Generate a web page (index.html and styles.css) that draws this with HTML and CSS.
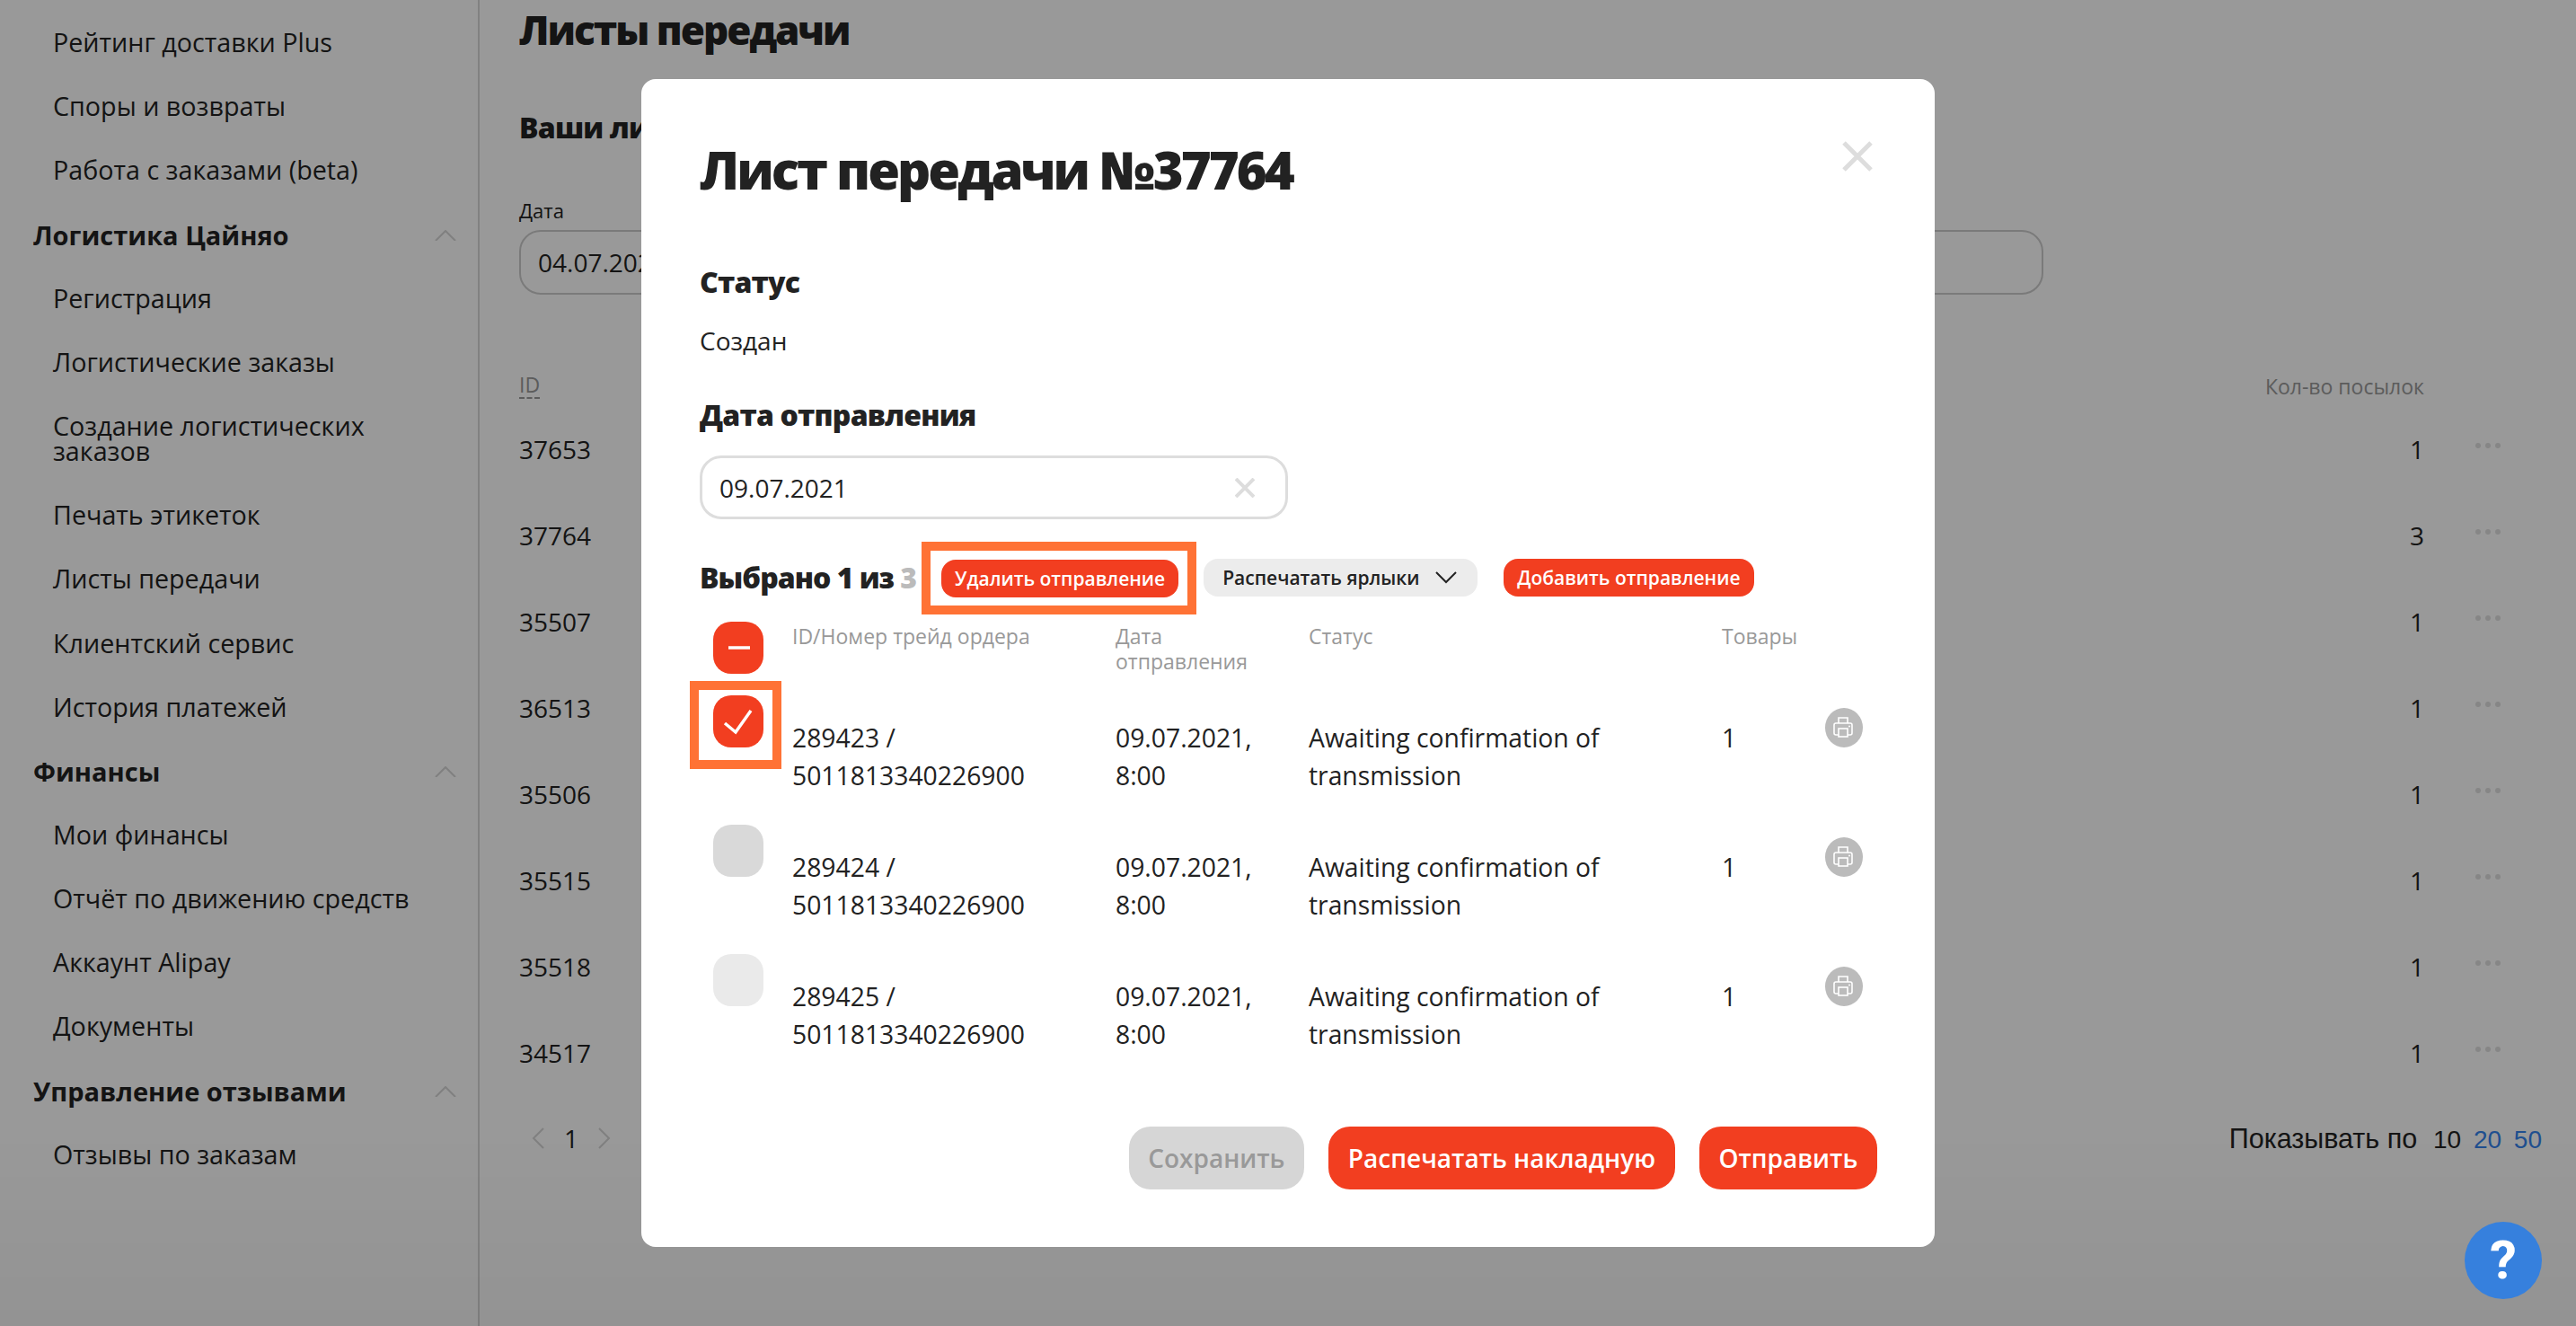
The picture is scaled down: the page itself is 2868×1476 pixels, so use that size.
FILE: index.html
```html
<!DOCTYPE html>
<html lang="ru">
<head>
    <meta charset="UTF-8">
    <title>Листы передачи</title>
    <link rel="stylesheet" href="styles.css">
</head>
<body>
    <div class="page">
        <nav class="sidebar">
            <a class="side-item">Рейтинг доставки Plus</a>
            <a class="side-item">Споры и возвраты</a>
            <a class="side-item">Работа с заказами (beta)</a>
            <div class="side-head">Логистика Цайняо <svg class="side-arrow" viewBox="0 0 24 12"><path d="M1 12 12 1l11 11"/></svg></div>
            <a class="side-item">Регистрация</a>
            <a class="side-item">Логистические заказы</a>
            <a class="side-item">Создание логистических заказов</a>
            <a class="side-item">Печать этикеток</a>
            <a class="side-item">Листы передачи</a>
            <a class="side-item">Клиентский сервис</a>
            <a class="side-item">История платежей</a>
            <div class="side-head">Финансы <svg class="side-arrow" viewBox="0 0 24 12"><path d="M1 12 12 1l11 11"/></svg></div>
            <a class="side-item">Мои финансы</a>
            <a class="side-item">Отчёт по движению средств</a>
            <a class="side-item">Аккаунт Alipay</a>
            <a class="side-item">Документы</a>
            <div class="side-head">Управление отзывами <svg class="side-arrow" viewBox="0 0 24 12"><path d="M1 12 12 1l11 11"/></svg></div>
            <a class="side-item">Отзывы по заказам</a>
        </nav>

        <main class="content">
            <h1 class="page-title">Листы передачи</h1>
            <h2 class="page-sub">Ваши листы передачи</h2>
            <div class="filter-label">Дата</div>
            <div class="filter-input">04.07.2021</div>

            <div class="list-head">
                <span class="list-id">ID</span>
                <span class="list-count">Кол-во посылок</span>
            </div>
            <div class="list-row"><span>37653</span><span class="list-num">1</span><span class="dots"><i></i><i></i><i></i></span></div>
            <div class="list-row"><span>37764</span><span class="list-num">3</span><span class="dots"><i></i><i></i><i></i></span></div>
            <div class="list-row"><span>35507</span><span class="list-num">1</span><span class="dots"><i></i><i></i><i></i></span></div>
            <div class="list-row"><span>36513</span><span class="list-num">1</span><span class="dots"><i></i><i></i><i></i></span></div>
            <div class="list-row"><span>35506</span><span class="list-num">1</span><span class="dots"><i></i><i></i><i></i></span></div>
            <div class="list-row"><span>35515</span><span class="list-num">1</span><span class="dots"><i></i><i></i><i></i></span></div>
            <div class="list-row"><span>35518</span><span class="list-num">1</span><span class="dots"><i></i><i></i><i></i></span></div>
            <div class="list-row"><span>34517</span><span class="list-num">1</span><span class="dots"><i></i><i></i><i></i></span></div>

            <div class="list-foot">
                <div class="pager">
                    <svg class="pager-arrow" viewBox="0 0 14 24"><path d="M13 1 2 12l11 11"/></svg>
                    <span>1</span>
                    <svg class="pager-arrow" viewBox="0 0 14 24"><path d="M1 1l11 11L1 23"/></svg>
                </div>
                <div class="per-page"><span class="per-label">Показывать по</span> <b>10</b> <a>20</a> <a>50</a></div>
            </div>
        </main>
    </div>

    <div class="overlay">
        <div class="modal">
            <svg class="modal-close" viewBox="0 0 34 34"><path d="M2 2l30 30M32 2 2 32"/></svg>
            <h1 class="modal-title">Лист передачи №37764</h1>

            <h3 class="field-head">Статус</h3>
            <p class="field-text">Создан</p>

            <h3 class="field-head date-head">Дата отправления</h3>
            <div class="date-input">
                09.07.2021
                <svg class="date-clear" viewBox="0 0 22 22"><path d="M1 1l20 20M21 1 1 21"/></svg>
            </div>

            <div class="toolbar">
                <span class="selected">Выбрано 1 из <em>3</em></span>
                <span class="marked marked-btn"><button class="small-btn">Удалить отправление</button></span>
                <button class="small-btn grey-btn">Распечатать ярлыки
                    <svg class="btn-arrow" viewBox="0 0 24 14"><path d="M1 1l11 11L23 1"/></svg>
                </button>
                <button class="small-btn">Добавить отправление</button>
            </div>

            <div class="ship-grid ship-head">
                <span class="check check-on">
                    <svg viewBox="0 0 56 58"><path class="check-mark" d="M17 29h24"/></svg>
                </span>
                <span>ID/Номер трейд ордера</span>
                <span>Дата отправления</span>
                <span>Статус</span>
                <span>Товары</span>
            </div>

            <div class="ship-grid ship-row">
                <span class="marked marked-check">
                    <span class="check check-on">
                        <svg viewBox="0 0 56 58"><path class="check-mark" d="M13 31l12 10 17-24"/></svg>
                    </span>
                </span>
                <span>289423 / 5011813340226900</span>
                <span>09.07.2021, 8:00</span>
                <span>Awaiting confirmation of transmission</span>
                <span>1</span>
                <span class="print-btn"><svg viewBox="0 0 42 44"><use href="#printer"/></svg></span>
            </div>
            <div class="ship-grid ship-row">
                <span class="check"></span>
                <span>289424 / 5011813340226900</span>
                <span>09.07.2021, 8:00</span>
                <span>Awaiting confirmation of transmission</span>
                <span>1</span>
                <span class="print-btn"><svg viewBox="0 0 42 44"><use href="#printer"/></svg></span>
            </div>
            <div class="ship-grid ship-row">
                <span class="check check-light"></span>
                <span>289425 / 5011813340226900</span>
                <span>09.07.2021, 8:00</span>
                <span>Awaiting confirmation of transmission</span>
                <span>1</span>
                <span class="print-btn"><svg viewBox="0 0 42 44"><use href="#printer"/></svg></span>
            </div>

            <div class="modal-foot">
                <button class="big-btn big-btn-off">Сохранить</button>
                <button class="big-btn">Распечатать накладную</button>
                <button class="big-btn">Отправить</button>
            </div>
        </div>
    </div>

    <div class="help">?</div>

    <svg class="icon-defs" width="0" height="0">
        <symbol id="printer" viewBox="0 0 42 44">
            <g fill="none" stroke="#fff" stroke-width="1.6">
                <path d="M15 17v-6h10v6"/>
                <path d="M15 30h-3a2 2 0 0 1-2-2v-9a2 2 0 0 1 2-2h16a2 2 0 0 1 2 2v9a2 2 0 0 1-2 2h-3"/>
                <rect x="15" y="23" width="10" height="9"/>
            </g>
            <circle cx="27" cy="20.500" r="1" fill="#fff"/>
        </symbol>
    </svg>
</body>
</html>
```

FILE: styles.css
```css
* {
    box-sizing: border-box;
    margin: 0;
    padding: 0;
}

body {
    background-color: white;
    color: #222;
    font-family: 'Open Sans', sans-serif;
    font-size: 28px;
    overflow: hidden;
}

.page {
    display: flex;
    height: 1476px;
    overflow: hidden;
}

/* sidebar */
.sidebar {
    width: 534px;
    flex-shrink: 0;
    padding: 33px 24px 0 37px;
    border-right: 2px solid #d8d8d8;
    font-size: 28.7px;
}

.side-item {
    display: block;
    margin: 0 0 43.2px 22px;
    line-height: 28px;
}

.side-head {
    display: flex;
    justify-content: space-between;
    align-items: center;
    margin-bottom: 41px;
    font-size: 29px;
    font-weight: 700;
    line-height: 30px;
}

.side-arrow {
    width: 24px;
    height: 12px;
    fill: none;
    stroke: #d5d5d5;
    stroke-width: 2;
}

/* page behind the dialog */
.content {
    flex: 1;
    padding: 0 38px 0 44px;
}

.page-title {
    font-size: 44px;
    font-weight: 800;
    line-height: 66px;
    letter-spacing: -2px;
}

.page-sub {
    margin-top: 56px;
    font-size: 32px;
    font-weight: 800;
    line-height: 40px;
    letter-spacing: -0.8px;
}

.filter-label {
    margin-top: 58px;
    font-size: 22px;
    line-height: 28px;
}

.filter-input {
    width: 1697px;
    height: 72px;
    margin-top: 8px;
    padding: 0 19px;
    border: 2px solid #ccc;
    border-radius: 24px;
    line-height: 68px;
}

.list-head {
    display: flex;
    justify-content: space-between;
    height: 38px;
    margin-top: 86px;
    padding-right: 131px;
    color: #999;
    font-size: 23px;
    line-height: 32px;
}

.list-id {
    border-bottom: 2px dashed #999;
    line-height: 28px;
    height: 30px;
}

.list-row {
    display: grid;
    grid-template-columns: 1fr auto 131px;
    height: 96px;
    align-items: center;
}

.list-num {
    text-align: right;
}

.dots {
    display: flex;
    gap: 5px;
    margin-left: 57px;
    margin-bottom: 8px;
}

.dots i {
    width: 6px;
    height: 6px;
    border-radius: 50%;
    background-color: #e0e0e0;
}

.list-foot {
    display: flex;
    justify-content: space-between;
    align-items: center;
    margin-top: 28px;
    padding-left: 14px;
}

.pager {
    display: flex;
    align-items: center;
    gap: 22px;
}

.pager-arrow {
    width: 14px;
    height: 24px;
    fill: none;
    stroke: #d5d5d5;
    stroke-width: 2;
}

.per-page {
    font-family: 'Liberation Sans', Arial, sans-serif;
}

.per-label {
    font-size: 30.5px;
}

.per-page b {
    margin-left: 10px;
    font-weight: 400;
}

.per-page a {
    margin-left: 6px;
    color: #3484ee;
}

/* dialog */
.overlay {
    position: fixed;
    inset: 0;
    display: flex;
    align-items: center;
    justify-content: center;
    background: linear-gradient(rgba(0, 0, 0, 0.4) 85%, rgba(0, 0, 0, 0.425));
}

.modal {
    position: relative;
    width: 1440px;
    height: 1300px;
    padding: 61px 64px 0 65px;
    border-radius: 16px;
    background-color: white;
}

.modal-close {
    position: absolute;
    top: 69px;
    right: 69px;
    width: 34px;
    height: 34px;
    fill: none;
    stroke: #ddd;
    stroke-width: 5;
}

.modal-title {
    font-size: 58px;
    font-weight: 800;
    line-height: 80px;
    letter-spacing: -3px;
}

.field-head {
    margin-top: 63px;
    font-size: 32px;
    font-weight: 800;
    line-height: 44px;
    letter-spacing: -0.8px;
}

.date-head {
    margin-top: 40px;
}

.field-text {
    margin-top: 22px;
    line-height: 42px;
}

.date-input {
    display: flex;
    justify-content: space-between;
    align-items: center;
    width: 655px;
    height: 71px;
    margin-top: 23px;
    padding: 0 34px 0 19px;
    border: 3px solid #ddd;
    border-radius: 24px;
}

.date-clear {
    width: 22px;
    height: 22px;
    fill: none;
    stroke: #ddd;
    stroke-width: 4;
}

.toolbar {
    display: flex;
    align-items: center;
    height: 42px;
    margin-top: 44px;
}

.selected {
    width: 269px;
    margin-bottom: 2px;
    font-size: 32px;
    font-weight: 800;
    letter-spacing: -1px;
    white-space: nowrap;
}

.selected em {
    color: #bbb;
    font-style: normal;
}

.small-btn {
    height: 42px;
    padding: 0 15px;
    border: none;
    border-radius: 16px;
    background-color: #f23e20;
    color: white;
    font-family: inherit;
    font-size: 21px;
    font-weight: 600;
}

.grey-btn {
    display: flex;
    align-items: center;
    justify-content: space-between;
    width: 305px;
    margin: 0 29px 0 28px;
    padding: 0 23px 0 21px;
    background-color: #ececec;
    color: #222;
}

.btn-arrow {
    width: 24px;
    height: 14px;
    fill: none;
    stroke: #222;
    stroke-width: 2;
}

/* orange annotation frames */
.marked {
    position: relative;
    display: block;
}

.marked::after {
    content: "";
    position: absolute;
    border: 10px solid #ff7235;
}

.marked-btn::after {
    inset: -19px -20px -19px -22px;
}

.marked-check {
    width: 56px;
    height: 58px;
    margin-left: 15px;
}

.marked-check::after {
    inset: -16px -20px -24px -26px;
}

.marked-check .check {
    margin-left: 0;
}

.ship-grid {
    display: grid;
    grid-template-columns: 103px 360px 215px 460px 115px 42px;
}

.ship-head {
    height: 82px;
    margin-top: 28px;
    color: #999;
    font-size: 23px;
    line-height: 28px;
}

.ship-head span {
    padding-top: 2px;
}

.ship-head span:nth-child(3) {
    padding-right: 60px;
}

.ship-head .check {
    padding-top: 0;
}

.ship-row {
    height: 144px;
    font-size: 28.3px;
    line-height: 42px;
}

.ship-row > span {
    padding-top: 26px;
}

.ship-row > .check,
.ship-row > .marked {
    padding-top: 0;
}

.ship-row > span:nth-child(2) {
    padding-right: 80px;
}

.ship-row > span:nth-child(3) {
    padding-right: 30px;
}

.ship-row > span:nth-child(4) {
    padding-right: 100px;
}

.check {
    display: block;
    width: 56px;
    height: 58px;
    margin-left: 15px;
    border-radius: 20px;
    background-color: #d9d9d9;
}

.check-on {
    background-color: #f23e20;
}

.check-light {
    background-color: #eaeaea;
}

.check svg {
    display: block;
    width: 56px;
    height: 58px;
}

.check-mark {
    fill: none;
    stroke: white;
    stroke-width: 3.5;
}

.ship-row > .print-btn {
    width: 42px;
    height: 44px;
    margin-top: 14px;
    padding: 0;
    border-radius: 50%;
    background-color: #bbb;
}

.print-btn svg {
    display: block;
    width: 42px;
    height: 44px;
}

.modal-foot {
    display: flex;
    justify-content: flex-end;
    gap: 27px;
    margin-top: 48px;
}

.big-btn {
    height: 70px;
    padding: 0 21.7px;
    border: none;
    border-radius: 24px;
    background-color: #f23e20;
    color: white;
    font-family: inherit;
    font-size: 28px;
    font-weight: 600;
}

.big-btn-off {
    background-color: #d6d6d6;
    color: #999;
}

.help {
    position: fixed;
    right: 38px;
    bottom: 30px;
    width: 86px;
    height: 86px;
    border-radius: 50%;
    background-color: #3680dd;
    color: white;
    font-family: Roboto, sans-serif;
    font-size: 60px;
    font-weight: 700;
    line-height: 86px;
    text-align: center;
}

.icon-defs {
    position: absolute;
}
```
